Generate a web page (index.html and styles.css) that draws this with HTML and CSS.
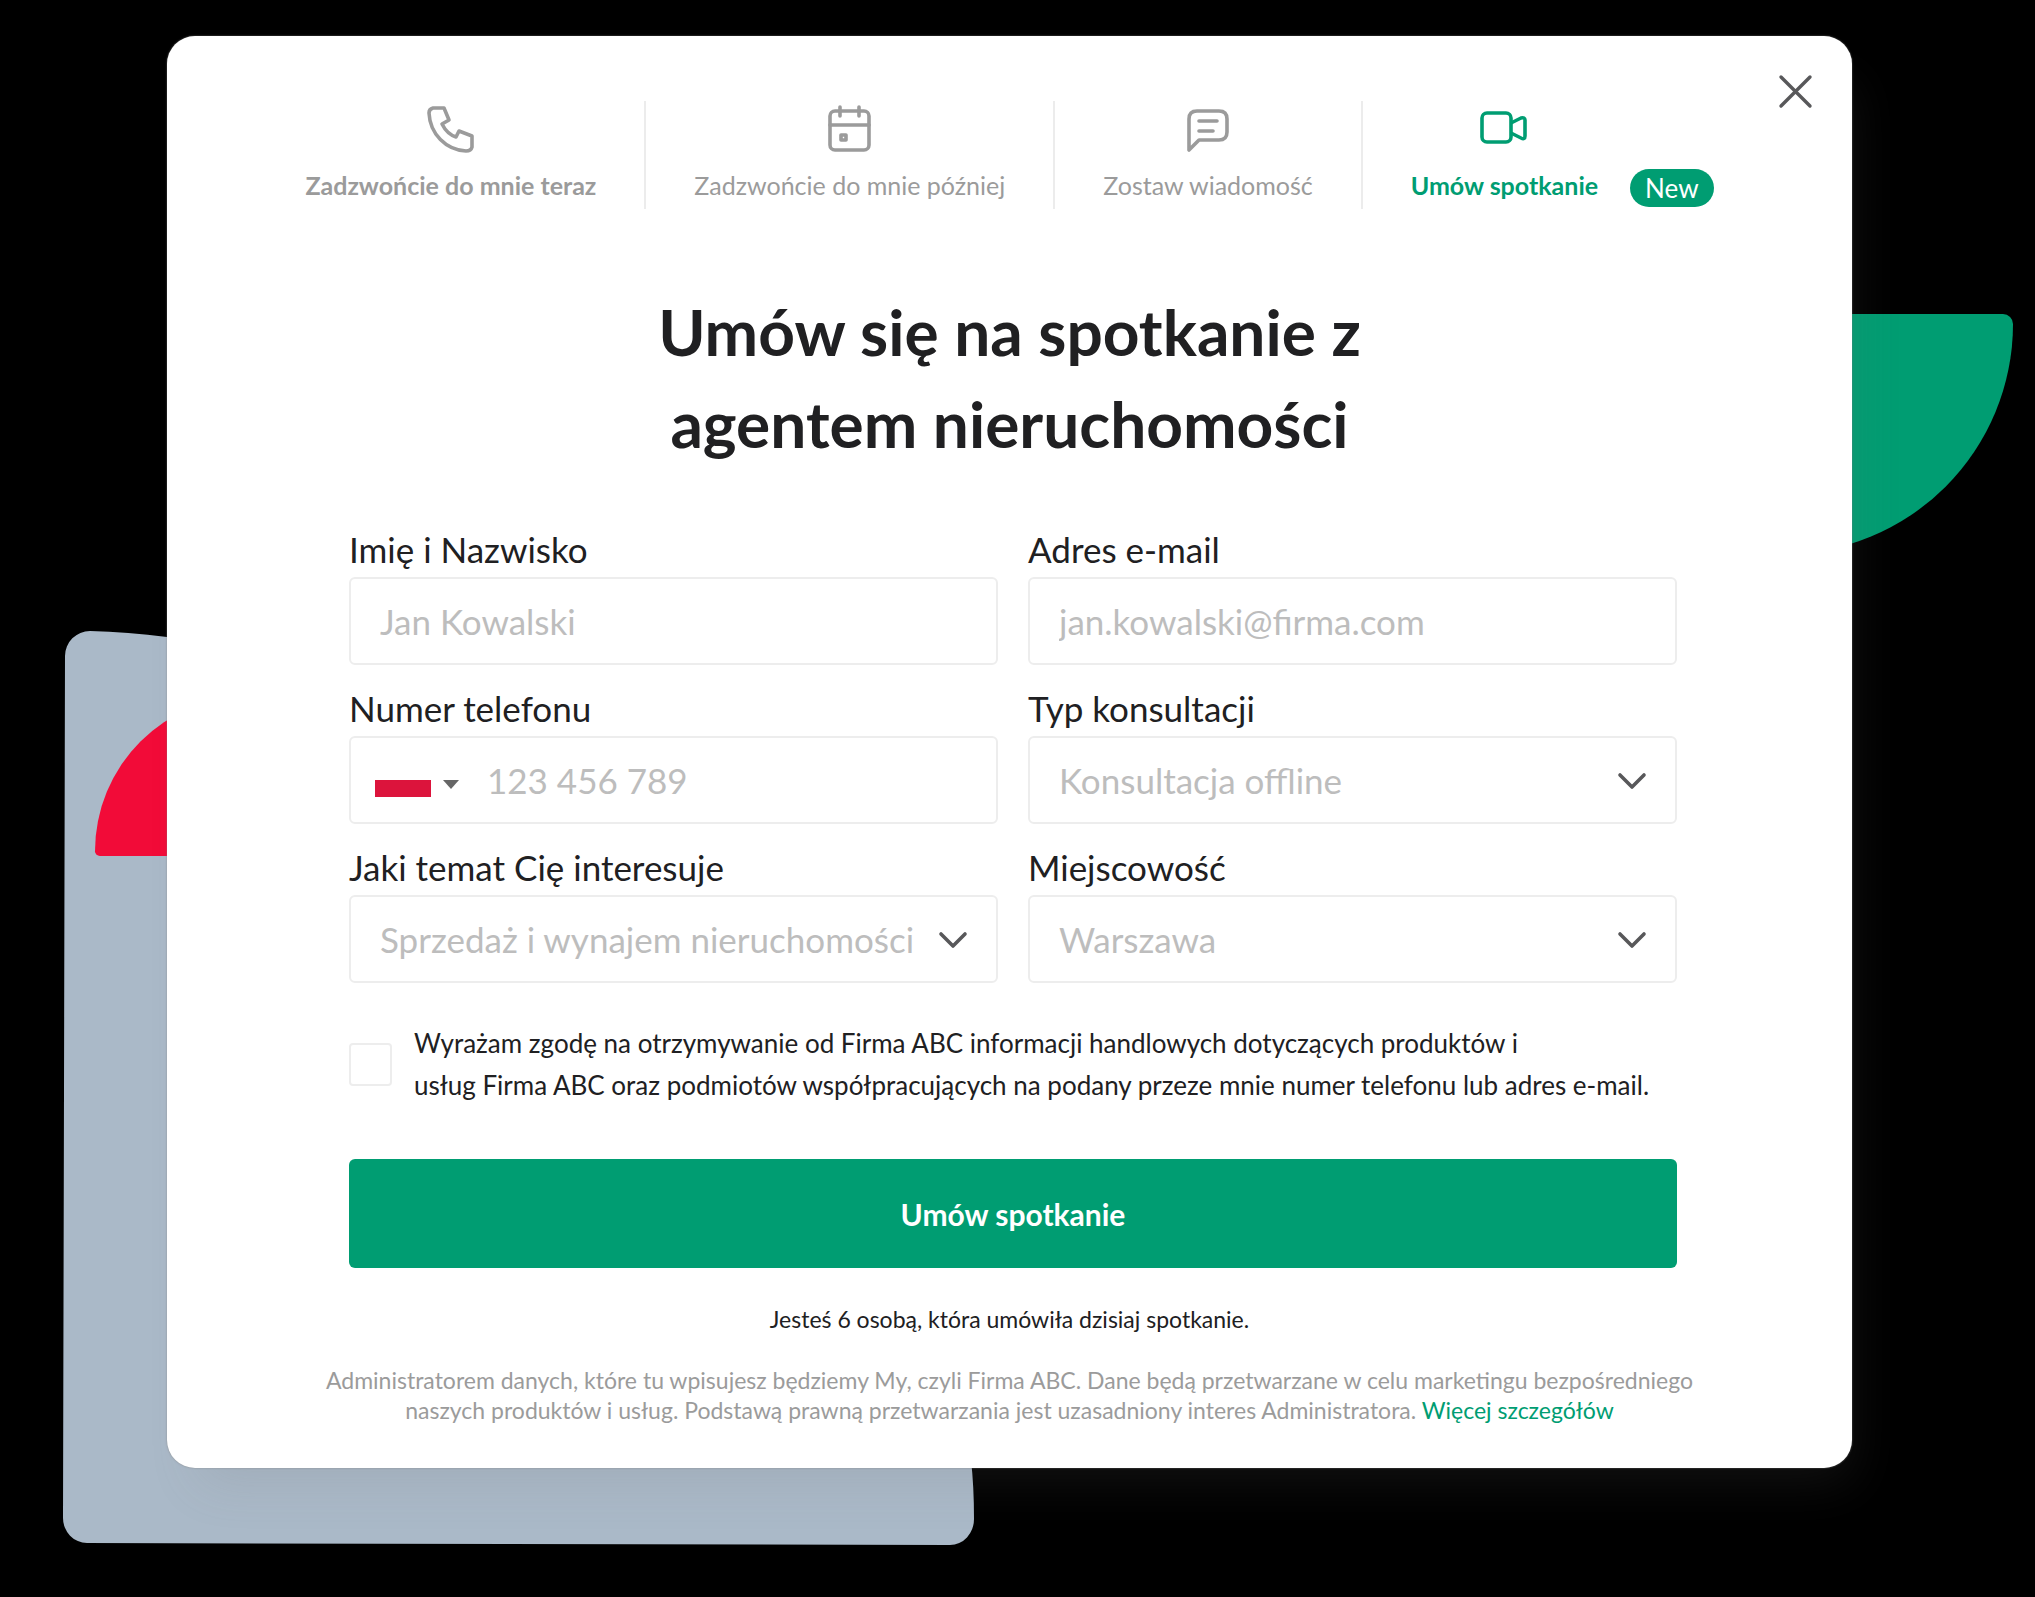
FILE: index.html
```html
<!DOCTYPE html>
<html lang="pl">
<head>
  <meta charset="UTF-8" />
  <meta name="viewport" content="width=device-width, initial-scale=1.0"/>
  <title>Umów spotkanie</title>
  <link rel="stylesheet" href="styles.css">
</head>
<body>
  <div class="page">
    <!-- Background shapes -->
    <svg class="shape-blue" viewBox="0 0 912 914" aria-hidden="true">
      <path d="M27 0 Q65 1 104 6 C560 50 880 380 908 829 Q911 855 911 888 A24 26 0 0 1 887 914 L24 912 A24 25 0 0 1 0 887 L2 25 A25 25 0 0 1 27 0 Z" fill="#aab9c8"/>
    </svg>
    <div class="shape-red"></div>
    <div class="shape-green"></div>

    <main class="modal">
      <button class="close" type="button" aria-label="Zamknij">
        <svg width="36" height="36" viewBox="0 0 36 36" fill="none" stroke="#58585a" stroke-width="3.4" stroke-linecap="round">
          <path d="M4 4 L33 33 M33 4 L4 33"/>
        </svg>
      </button>

      <nav class="tabs">
        <button class="tab strong" type="button">
          <svg width="50" height="50" viewBox="0 0 50 50" fill="none" stroke="currentColor" stroke-width="3.6" stroke-linejoin="round">
            <path d="M7 5 H18 L23 17 L16 21 C19 27 24 32 30 34 L33 28 L46 33 V44 Q45 48 40 48 C20 47 4 31 3 10 Q3 6 7 5 Z"/>
          </svg>
          <span>Zadzwońcie do mnie teraz</span>
        </button>
        <button class="tab" type="button">
          <svg width="50" height="50" viewBox="0 0 50 50" fill="none" stroke="currentColor" stroke-width="3.6" stroke-linecap="round">
            <rect x="5" y="8" width="39" height="39" rx="5"/>
            <path d="M5 22 H44 M15 4 V13 M34 4 V13"/>
            <rect x="16" y="32" width="5" height="5" stroke-linejoin="round"/>
          </svg>
          <span>Zadzwońcie do mnie później</span>
        </button>
        <button class="tab" type="button">
          <svg width="50" height="50" viewBox="0 0 50 50" fill="none" stroke="currentColor" stroke-width="3.6" stroke-linecap="round" stroke-linejoin="round">
            <path d="M6 47 V16 Q6 8 14 8 H36 Q44 8 44 16 V29 Q44 37 36 37 H16 Z"/>
            <path d="M16 18 H34 M16 28 H30"/>
          </svg>
          <span>Zostaw wiadomość</span>
        </button>
        <button class="tab active" type="button">
          <svg width="50" height="50" viewBox="0 0 50 50" fill="none" stroke="currentColor" stroke-width="3.6" stroke-linejoin="round">
            <rect x="3" y="10" width="29" height="29" rx="5"/>
            <path d="M32 20 L42 15 Q46 14 46 17 V33 Q46 37 42 35 L32 30"/>
          </svg>
          <span>Umów spotkanie</span>
        </button>
        <span class="badge">New</span>
      </nav>

      <h1>Umów się na spotkanie z<br>agentem nieruchomości</h1>

      <form class="form">
        <div class="fields">
          <div class="field">
            <label for="name">Imię i Nazwisko</label>
            <input id="name" class="control" type="text" placeholder="Jan Kowalski">
          </div>
          <div class="field">
            <label for="email">Adres e-mail</label>
            <input id="email" class="control" type="email" placeholder="jan.kowalski@firma.com">
          </div>
          <div class="field">
            <label for="phone">Numer telefonu</label>
            <div class="control phone">
              <button class="country" type="button" aria-label="Polska">
                <span class="flag"></span>
                <svg width="18" height="18" viewBox="0 0 18 18"><path d="M1 1 H17 L9 10 Z" fill="#666"/></svg>
              </button>
              <input id="phone" type="tel" placeholder="123 456 789">
            </div>
          </div>
          <div class="field">
            <label for="type">Typ konsultacji</label>
            <div class="select">
              <select id="type" class="control"><option>Konsultacja offline</option></select>
              <svg class="arrow" width="30" height="18" viewBox="0 0 30 18"><path d="M3 3 L15 15 L27 3"/></svg>
            </div>
          </div>
          <div class="field">
            <label for="topic">Jaki temat Cię interesuje</label>
            <div class="select">
              <select id="topic" class="control"><option>Sprzedaż i wynajem nieruchomości</option></select>
              <svg class="arrow" width="30" height="18" viewBox="0 0 30 18"><path d="M3 3 L15 15 L27 3"/></svg>
            </div>
          </div>
          <div class="field">
            <label for="city">Miejscowość</label>
            <div class="select">
              <select id="city" class="control"><option>Warszawa</option></select>
              <svg class="arrow" width="30" height="18" viewBox="0 0 30 18"><path d="M3 3 L15 15 L27 3"/></svg>
            </div>
          </div>
        </div>

        <div class="consent">
          <input id="consent" type="checkbox">
          <label for="consent">Wyrażam zgodę na otrzymywanie od Firma ABC informacji handlowych dotyczących produktów i<br>usług Firma ABC oraz podmiotów współpracujących na podany przeze mnie numer telefonu lub adres e-mail.</label>
        </div>

        <button class="submit" type="submit">Umów spotkanie</button>
      </form>

      <p class="count">Jesteś 6 osobą, która umówiła dzisiaj spotkanie.</p>
      <p class="legal">Administratorem danych, które tu wpisujesz będziemy My, czyli Firma ABC. Dane będą przetwarzane w celu marketingu bezpośredniego<br>naszych produktów i usług. Podstawą prawną przetwarzania jest uzasadniony interes Administratora. <a href="#">Więcej szczegółów</a></p>
    </main>
  </div>
</body>
</html>
```
FILE: styles.css
```css
* {
  box-sizing: border-box;
}
body {
  margin: 0;
  background: #000;
  color: #202022;
  font-family: Lato, sans-serif;
}
button, input, select {
  font: inherit;
  color: inherit;
}
button {
  background: none;
  border: 0;
  padding: 0;
  cursor: pointer;
}
.page {
  position: relative;
  overflow: hidden;
  min-height: 100vh;
  padding: 36px 183px 130px 167px;
}
.shape-blue {
  position: absolute;
  left: 63px;
  top: 631px;
  width: 912px;
  height: 914px;
}
.shape-red {
  position: absolute;
  left: 95px;
  top: 696px;
  width: 160px;
  height: 160px;
  background: #f20b38;
  border-radius: 160px 0 0 5px;
}
.shape-green {
  position: absolute;
  right: 22px;
  top: 314px;
  width: 242px;
  height: 240px;
  background: #009d72;
  border-radius: 0 10px 230px 0;
}
.modal {
  position: relative;
  background: #fff;
  border-radius: 28px;
  padding: 65px 40px 43px;
  text-align: center;
  box-shadow: 0 0 2px rgba(128,128,128,0.8), 16px 30px 50px -16px rgba(110,110,110,0.16);
}
.close {
  position: absolute;
  top: 37px;
  right: 39px;
  height: 36px;
}
.tabs {
  display: flex;
  justify-content: center;
}
.tab {
  display: flex;
  flex-direction: column;
  align-items: center;
  gap: 12px;
  height: 108px;
  padding: 2px 48px 0;
  border-right: 2px solid #ececec;
  color: #9b9b9b;
  font-size: 25px;
  line-height: 40px;
  white-space: nowrap;
}
.tab.strong {
  font-weight: bold;
}
.tab.active {
  color: #009d72;
  font-weight: bold;
  border-right: 0;
  padding-right: 32px;
}
.tab:first-child {
  padding-left: 0;
}
.badge {
  align-self: flex-end;
  height: 38px;
  margin-bottom: 2px;
  padding: 0 15px;
  border-radius: 19px;
  background: #009d72;
  color: #fff;
  font-size: 26px;
  line-height: 38px;
}
h1 {
  margin: 77px 0 59px;
  font-size: 64px;
  line-height: 92px;
}
.form {
  max-width: 1335px;
  margin: 0 auto;
  padding-left: 7px;
  text-align: left;
}
.fields {
  display: grid;
  grid-template-columns: 1fr 1fr;
  gap: 23px 30px;
}
.field label {
  display: block;
  font-size: 35px;
  line-height: 40px;
  margin-bottom: 8px;
}
.control {
  display: block;
  width: 100%;
  height: 88px;
  padding: 0 29px;
  background: #fff;
  border: 2px solid #ededed;
  border-radius: 6px;
  color: #bdbdbd;
  font-size: 35px;
}
::placeholder {
  color: #bdbdbd;
  opacity: 1;
}
.phone {
  display: flex;
  align-items: center;
  padding-left: 24px;
}
.phone input {
  flex: 1;
  min-width: 0;
  padding: 0;
  border: 0;
}
.country {
  display: flex;
  align-items: flex-end;
  gap: 11px;
  margin-right: 27px;
}
/* white half of the flag blends with the field */
.flag {
  width: 56px;
  height: 34px;
  background: linear-gradient(#fff 50%, #dc143c 50%);
}
.select {
  position: relative;
}
.select select {
  appearance: none;
}
.arrow {
  position: absolute;
  right: 30px;
  top: 36px;
  fill: none;
  stroke: #58585a;
  stroke-width: 3.6;
  stroke-linecap: round;
  stroke-linejoin: round;
  pointer-events: none;
}
.consent {
  display: flex;
  align-items: center;
  gap: 22px;
  margin: 39px 0 53px;
  font-size: 26px;
  line-height: 42px;
}
.consent input {
  appearance: none;
  flex: none;
  width: 43px;
  height: 43px;
  margin: 0;
  border: 2px solid #ededed;
  border-radius: 4px;
}
.submit {
  width: 100%;
  height: 109px;
  border-radius: 6px;
  background: #009d72;
  color: #fff;
  font-size: 30px;
  font-weight: bold;
}
.count {
  margin: 36px 0 31px;
  font-size: 23px;
  line-height: 30px;
}
.legal {
  margin: 0;
  color: #9b9b9b;
  font-size: 23px;
  line-height: 30px;
}
.legal a {
  color: #009d72;
  text-decoration: none;
}
```
